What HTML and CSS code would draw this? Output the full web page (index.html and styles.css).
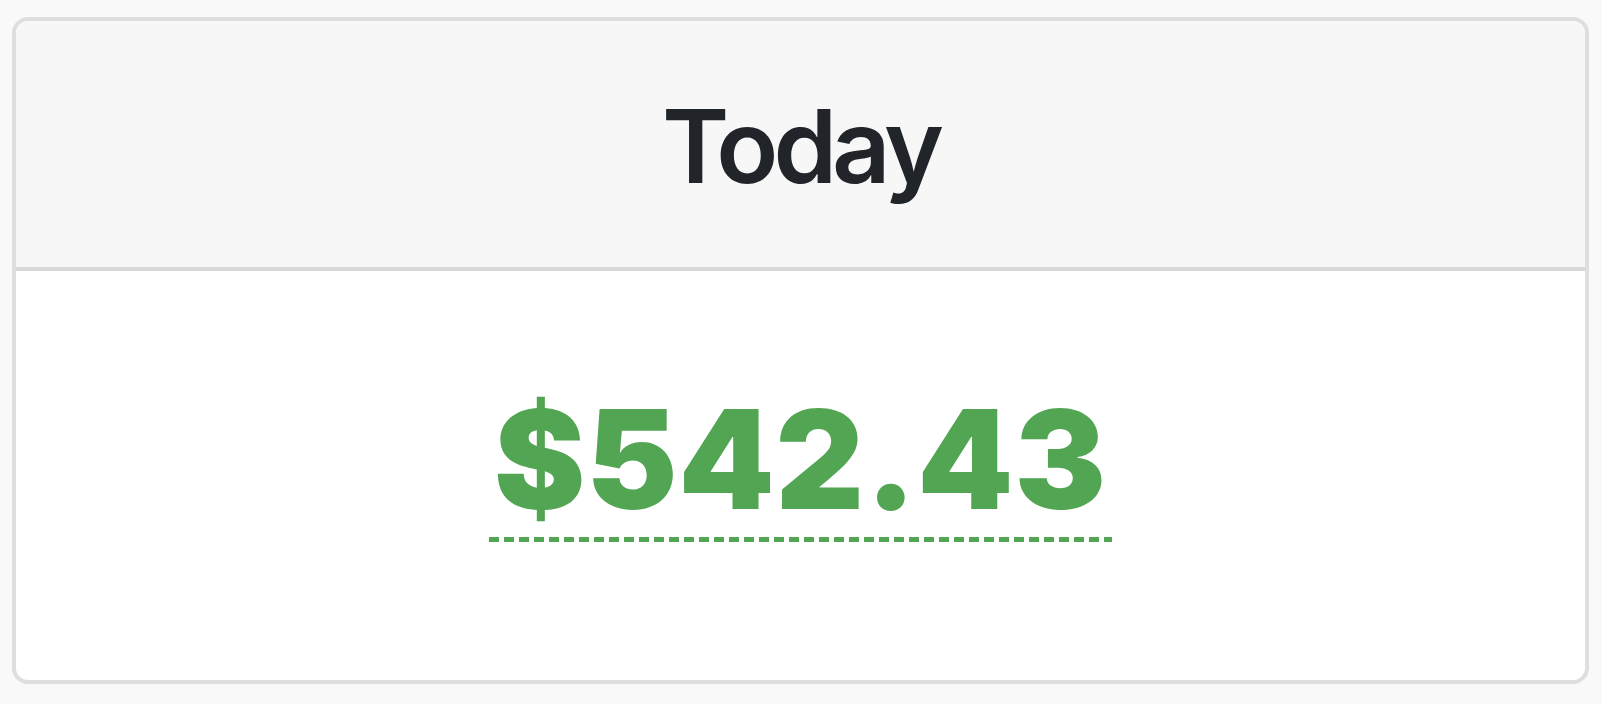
FILE: index.html
```html
<!DOCTYPE html>
<html lang="en">
<head>
<meta charset="utf-8">
<title>Today</title>
<link rel="stylesheet" href="styles.css">
</head>
<body>
<div class="card">
  <div class="card-header">
    <h1 class="title">Today</h1>
  </div>
  <div class="card-body">
    <span class="amount">$542.43</span>
  </div>
</div>
</body>
</html>
```

FILE: styles.css
```css
html, body {
  margin: 0;
  padding: 0;
  background: #f9f9f9;
}
body {
  padding: 17px 13px 0 12px;
  font-family: Inter, "Liberation Sans", sans-serif;
}
.card {
  height: 667px;
  box-sizing: border-box;
  border: 4px solid #dedede;
  border-radius: 16px;
  overflow: hidden;
  display: flex;
  flex-direction: column;
  background: #fff;
}
.card-header {
  height: 250px;
  box-sizing: border-box;
  padding-top: 4px;
  background: #f7f7f7;
  border-bottom: 4px solid #d8d8d8;
  display: flex;
  align-items: center;
  justify-content: center;
}
.title {
  margin: 0;
  font-size: 102px;
  font-weight: 600;
  color: #212529;
  line-height: 1;
  letter-spacing: -5px;
}
.card-body {
  flex: 1;
  display: flex;
  align-items: center;
  justify-content: center;
}
.amount {
  font-size: 137px;
  font-weight: 900;
  color: #52a552;
  line-height: 1.2;
  letter-spacing: 1px;
  padding: 0 5px 1px 5px;
  margin-bottom: 32px;
  background-image: repeating-linear-gradient(to right, #52a552 0 10px, transparent 10px 15px);
  background-size: 100% 5px;
  background-repeat: no-repeat;
  background-position: left bottom;
}
```
